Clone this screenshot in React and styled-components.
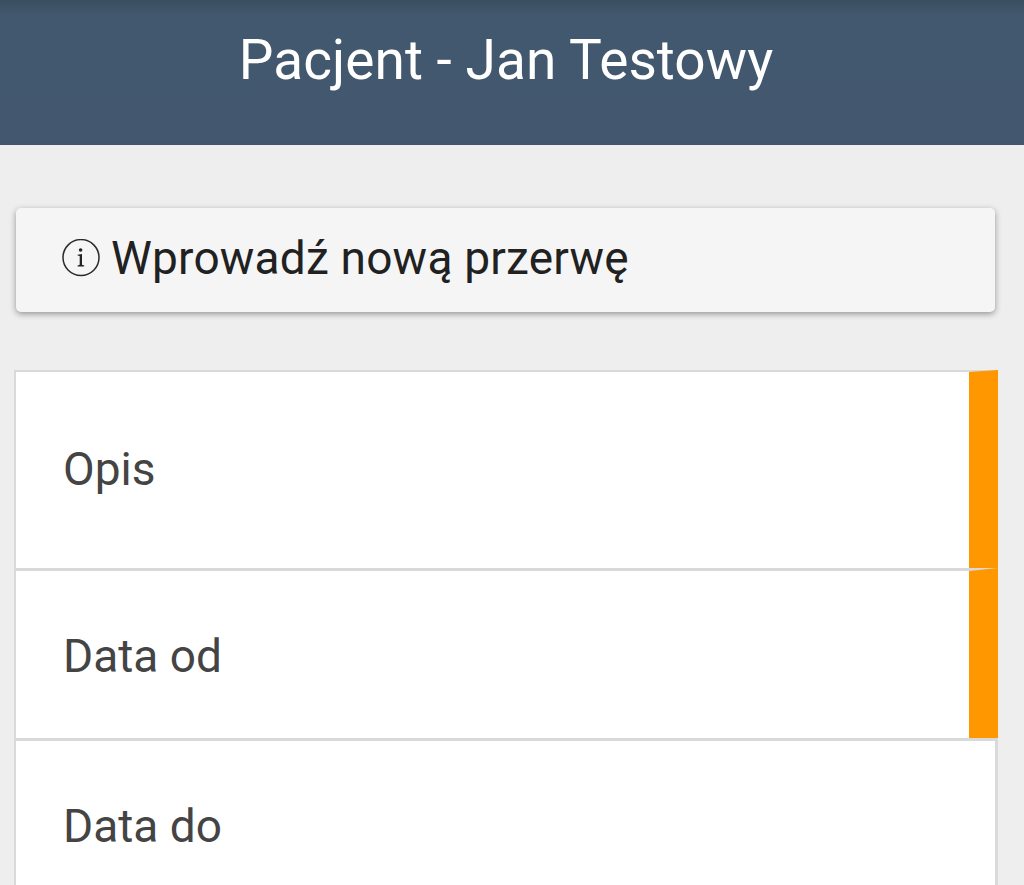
import React from 'react';
import styled, { createGlobalStyle } from 'styled-components';

const GlobalStyle = createGlobalStyle`
  * {
    box-sizing: border-box;
  }

  body {
    margin: 0;
    background: #eee;
    font-family: Roboto, 'Liberation Sans', sans-serif;
  }
`;

const StyledWrapper = styled.div`
  height: 885px;
  overflow: hidden;
`;

const Header = styled.header`
  height: 145px;
  padding-top: 28px;
  background: linear-gradient(#3a4e61, #42586e 16px, #43586f 142px, #40546b);
  text-align: center;
`;

const StyledTitle = styled.h1`
  margin: 0;
  padding-right: 12px;
  font-size: 55px;
  font-weight: 400;
  line-height: 65px;
  letter-spacing: 0.05px;
  color: #fff;
`;

const InfoCard = styled.section`
  display: flex;
  align-items: center;
  height: 104px;
  margin: 63px 29px 0 16px;
  padding: 0 46px 4px;
  background: #f5f5f5;
  border-radius: 5px;
  box-shadow: 0 2px 6px rgba(0, 0, 0, 0.38);
`;

const InfoText = styled.p`
  margin: 0 0 0 11px;
  font-size: 46px;
  letter-spacing: 0.2px;
  color: #212121;
`;

const List = styled.ul`
  margin: 58px 26px 0 14px;
  padding: 0;
  list-style: none;
`;

const Row = styled.li`
  display: flex;
  align-items: center;
  height: ${({ $height }) => $height}px;
  padding-left: 47px;
  background: #fff;
  border: 2px solid #d9d9d9;
  border-top-width: 3px;
  border-bottom: 0;
  border-right: ${({ $required }) => ($required ? '29px solid #ff9800' : '3px solid #dadada')};
  font-size: 46px;
  color: #444;

  &:first-child {
    padding-bottom: 3px;
    border-top-width: 2px;
  }

  &:not(:first-child) {
    padding-top: 3px;
  }
`;

const rows = [
  { label: 'Opis', height: 198, required: true },
  { label: 'Data od', height: 170, required: true },
  { label: 'Data do', height: 170, required: false }
];

const InfoIcon = () => (
  <svg width='38' height='38' viewBox='0 0 38 38' fill='none'>
    <circle cx='19' cy='18.6' r='18' stroke='#2a2a2a' strokeWidth='1.5' />
    <circle cx='18.6' cy='11' r='1.8' fill='#222' />
    <path d='M15.6 15.8L20 15V25.8L22.2 26.6V27.4H15.6V26.6L17.7 25.8V17L15.6 16.6Z' fill='#222' />
  </svg>
);

const App = () => (
  <StyledWrapper>
    <GlobalStyle />
    <Header>
      <StyledTitle>Pacjent - Jan Testowy</StyledTitle>
    </Header>
    <InfoCard>
      <InfoIcon />
      <InfoText>Wprowadź nową przerwę</InfoText>
    </InfoCard>
    <List>
      {rows.map(({ label, height, required }) => (
        <Row key={label} $height={height} $required={required}>
          {label}
        </Row>
      ))}
    </List>
  </StyledWrapper>
);

export default App;
